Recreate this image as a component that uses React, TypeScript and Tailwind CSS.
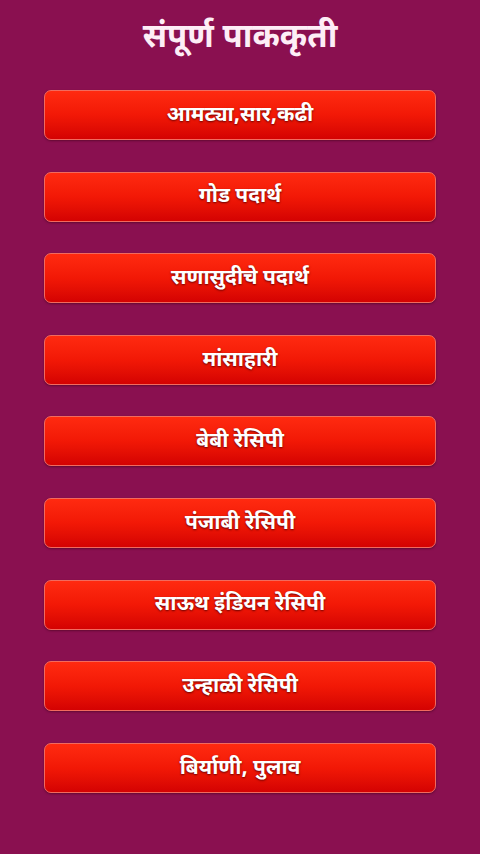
const items = [
  "आमट्या,सार,कढी",
  "गोड पदार्थ",
  "सणासुदीचे पदार्थ",
  "मांसाहारी",
  "बेबी रेसिपी",
  "पंजाबी रेसिपी",
  "साऊथ इंडियन रेसिपी",
  "उन्हाळी रेसिपी",
  "बिर्याणी, पुलाव",
];

export default function App() {
  return (
    <div
      className="flex min-h-[854px] w-full flex-col items-center bg-[#8a1050] font-['Noto_Sans_Devanagari','Lohit_Devanagari','Noto_Sans',sans-serif]"
    >
      <h1 className="mt-[14px] h-[50px] text-[33px] font-bold leading-[50px] text-[#fdeef6]">
        संपूर्ण पाककृती
      </h1>
      <div className="mt-[26px] flex w-[392px] flex-col gap-[31.6px]">
        {items.map((label) => (
          <button
            key={label}
            className="flex h-[50px] items-center justify-center rounded-[7px] border border-[#f26a5e] bg-gradient-to-b from-[#ff2a10] via-[#f21806] to-[#d40202] pt-[3px] text-[21px] font-bold text-white shadow-[0_1px_2px_rgba(60,0,20,0.5)] [text-shadow:0_1px_2px_rgba(90,0,0,0.9)]"
          >
            {label}
          </button>
        ))}
      </div>
    </div>
  );
}
